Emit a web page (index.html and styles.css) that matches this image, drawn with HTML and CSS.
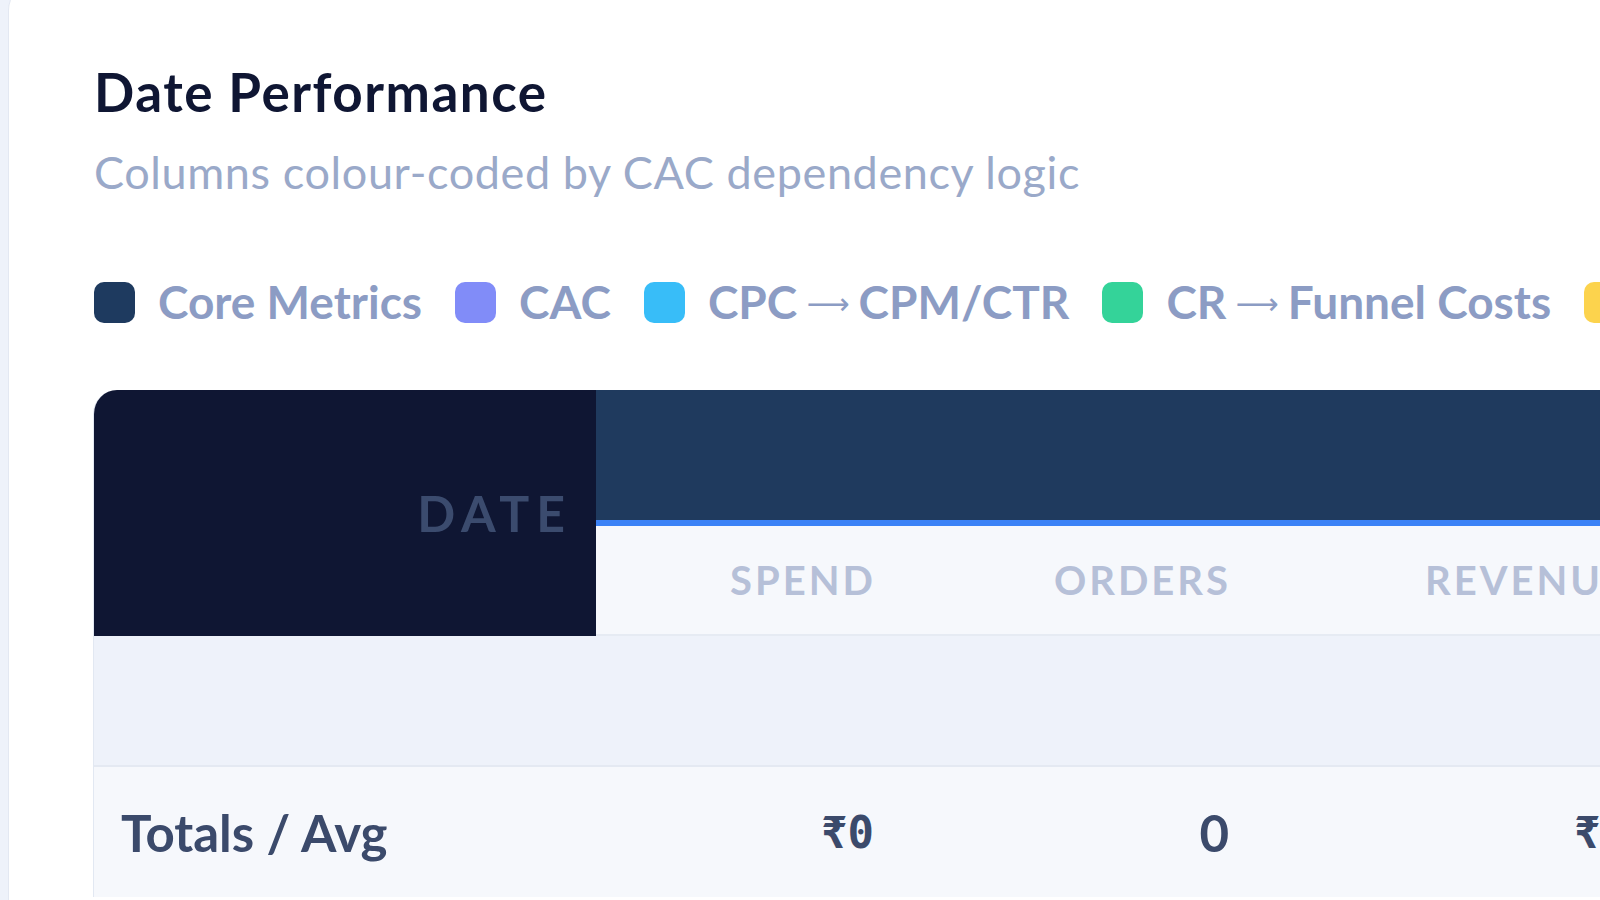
FILE: index.html
```html
<!DOCTYPE html>
<html lang="en">
<head>
    <meta charset="UTF-8">
    <meta name="viewport" content="width=device-width, initial-scale=1.0">
    <title>Date Performance</title>
    <link rel="stylesheet" href="styles.css">
</head>
<body>

<!-- Date performance card -->
<div class="card">
    <h2 class="heading">Date Performance</h2>
    <p class="sub">Columns colour-coded by CAC dependency logic</p>

    <!-- Legend -->
    <div class="legend">
        <span class="legend-item"><i class="swatch core"></i><span>Core Metrics</span></span>
        <span class="legend-item"><i class="swatch cac"></i><span>CAC</span></span>
        <span class="legend-item"><i class="swatch cpc"></i><span>CPC <span class="arrow">&#x27F6;</span> CPM/CTR</span></span>
        <span class="legend-item"><i class="swatch cr"></i><span>CR <span class="arrow">&#x27F6;</span> Funnel Costs</span></span>
        <span class="legend-item"><i class="swatch aov"></i><span>AOV <span class="arrow">&#x27F6;</span> Revenue</span></span>
    </div>

    <!-- Table -->
    <div class="table-wrap">
        <table class="perf">
            <thead>
                <tr class="group-row">
                    <th class="date-head" rowspan="2">Date</th>
                    <th class="group core-group" colspan="3"></th>
                </tr>
                <tr class="col-row">
                    <th class="col-spend">Spend</th>
                    <th class="col-orders">Orders</th>
                    <th class="col-revenue">Revenue</th>
                </tr>
            </thead>
            <tbody>
                <tr class="empty-row">
                    <td colspan="4"></td>
                </tr>
                <tr class="totals-row">
                    <td class="totals-label">Totals / Avg</td>
                    <td class="num mono">₹0</td>
                    <td class="num">0</td>
                    <td class="num mono">₹0</td>
                </tr>
            </tbody>
        </table>
    </div>
</div>

</body>
</html>
```

FILE: styles.css
```css
/* General styling */
body {
    font-family: Lato, "Noto Sans", sans-serif;
    margin: 0;
    padding: 0 0 0 8px;
    background-color: #eef2fa;
    overflow: hidden;
    height: 900px;
}

/* Card */
.card {
    width: 1900px;
    margin-top: -16px;
    padding: 75px 0 0 85px;
    background: #ffffff;
    border: 1px solid #e3e8f2;
    border-radius: 26px;
    height: 1000px;
}

.heading {
    margin: 0;
    font-size: 53px;
    font-weight: 700;
    line-height: 64px;
    color: #0f1633;
    letter-spacing: 1.5px;
}

.sub {
    margin: 20px 0 0;
    font-size: 45px;
    line-height: 56px;
    color: #9aa9c9;
    letter-spacing: 0.6px;
}

/* Legend */
.legend {
    display: flex;
    gap: 33px;
    margin-top: 74px;
    white-space: nowrap;
}

.legend-item {
    display: flex;
    align-items: center;
    gap: 23px;
    font-size: 46px;
    font-weight: 700;
    line-height: 56px;
    color: #8c9cc4;
}

.legend-item .arrow {
    display: inline-block;
    width: 43px;
    margin: 0 -2px;
    font-family: "DejaVu Sans", sans-serif;
    font-size: 30px;
    font-weight: 400;
    text-align: center;
    line-height: 1;
    vertical-align: 5px;
}

.swatch {
    width: 41px;
    height: 41px;
    border-radius: 10px;
    flex-shrink: 0;
}

.swatch.core { background: #1e3a5f; }
.swatch.cac  { background: #818cf8; }
.swatch.cpc  { background: #38bdf8; }
.swatch.cr   { background: #34d399; }
.swatch.aov  { background: #fcd34d; }

/* Table */
.table-wrap {
    margin-top: 60px;
    margin-left: -1px;
    border-left: 1px solid #e2e8f2;
    border-top-left-radius: 24px;
    overflow: hidden;
    width: max-content;
}

.perf {
    border-collapse: separate;
    border-spacing: 0;
    table-layout: fixed;
}

.perf th {
    padding: 0;
    font-weight: 700;
    text-transform: uppercase;
}

.date-head {
    width: 502px;
    background: #0f1633;
    color: #3b4b6e;
    font-size: 50px;
    letter-spacing: 7px;
    text-align: right;
    padding-right: 24px !important;
    vertical-align: middle;
    box-sizing: border-box;
}

.group-row .group {
    height: 130px;
    background: #1f3a5e;
    border-bottom: 6px solid #3b82f6;
}

.col-row th {
    height: 108px;
    background: #f6f8fc;
    color: #b6c0d8;
    font-size: 40px;
    letter-spacing: 3px;
    text-align: right;
    border-bottom: 2px solid #e6ebf3;
}

.col-spend { width: 280px; padding-right: 76px !important; }
.col-orders { width: 279px; padding-right: 76px !important; }
.col-revenue { width: 322px; padding-right: 76px !important; }

.empty-row td {
    height: 129px;
    padding: 0;
    background: #eef2fa;
    border-bottom: 2px solid #e4e9f2;
}

.totals-row td {
    height: 130px;
    padding: 0 78px 0 0;
    background: #f6f8fc;
    color: #3b4a6b;
    font-weight: 700;
    font-size: 51px;
}

.totals-row .totals-label {
    padding-left: 27px;
    text-align: left;
}

.totals-row .num {
    text-align: right;
}

.totals-row .mono {
    font-family: "DejaVu Sans Mono", monospace;
    font-size: 44px;
}
```
